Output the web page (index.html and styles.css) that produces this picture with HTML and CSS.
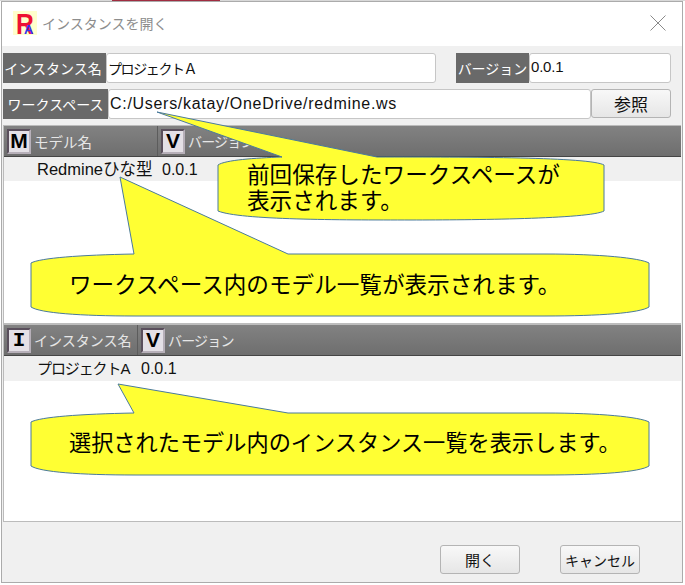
FILE: index.html
```html
<!DOCTYPE html>
<html lang="ja">
<head>
<meta charset="utf-8">
<title>インスタンスを開く</title>
<link rel="stylesheet" href="styles.css">
</head>
<body>
<div class="edge"></div>
<div class="window">
  <header class="titlebar">
    <div class="logo"><span class="logo-r">R</span><span class="logo-a">A</span></div>
    <span class="title">インスタンスを開く</span>
    <svg class="close" width="16" height="16" viewBox="0 0 16 16">
      <path d="M0.5 0.5L15.5 15.5M15.5 0.5L0.5 15.5" stroke="#8a8a8a" fill="none"/>
    </svg>
  </header>
  <main class="content">
    <div class="row">
      <label class="label w-inst">インスタンス名</label>
      <div class="input w-inst-input">プロジェクトＡ</div>
      <label class="label w-ver">バージョン</label>
      <div class="input w-ver-input">0.0.1</div>
    </div>
    <div class="row">
      <label class="label w-ws">ワークスペース</label>
      <div class="input w-ws-input">C:/Users/katay/OneDrive/redmine.ws</div>
      <button class="btn w-browse">参照</button>
    </div>
    <section class="table">
      <div class="pane pane-top">
        <div class="thead">
          <div class="th col-model"><span class="badge">M</span><span class="th-wide">モデル名</span></div>
          <div class="th"><span class="badge">V</span><span class="th-narrow">バージョン</span></div>
        </div>
        <div class="tr">
          <span class="cell cell-model">Redmineひな型</span>
          <span class="cell">0.0.1</span>
        </div>
      </div>
      <div class="pane pane-bottom">
        <div class="thead">
          <div class="th col-inst"><span class="badge badge-slab">I</span><span>インスタンス名</span></div>
          <div class="th"><span class="badge">V</span><span class="th-narrow">バージョン</span></div>
        </div>
        <div class="tr tr-inst">
          <span class="cell cell-inst">プロジェクトA</span>
          <span class="cell">0.0.1</span>
        </div>
      </div>
    </section>
    <footer class="footer">
      <button class="btn w-foot w-open">開く</button>
      <button class="btn w-foot">キャンセル</button>
    </footer>
  </main>
</div>
<svg class="callouts" width="685" height="585" viewBox="0 0 685 585">
  <path class="bubble" d="M157 112L377 157C470 157 590 157 604 165V211C590 219 470 220 411 220C340 220 240 220 218 211V165C225 160 255 158 282 157Z"/>
  <text class="bubble-text wide" x="247" y="183">前回保存したワークスペースが</text>
  <text class="bubble-text wide" x="247" y="209">表示されます。</text>
  <path class="bubble" d="M120 177L288 254H545C600 254 640 258 649 263V307C640 313 600 316 545 316H135C80 316 40 313 31 307V263C40 258 80 255 134 254Z"/>
  <text class="bubble-text wide" x="69" y="293">ワークスペース内のモデル一覧が表示されます。</text>
  <path class="bubble" d="M118 384L288 413H545C600 413 640 417 649 422V466C640 472 600 475 545 475H135C80 475 40 472 31 466V422C40 417 80 414 134 413Z"/>
  <text class="bubble-text" x="69" y="451">選択されたモデル内のインスタンス一覧を表示します。</text>
</svg>
</body>
</html>
```
FILE: styles.css
```css
html, body {
  margin: 0;
  padding: 0;
  background: #fff;
}
body {
  position: relative;
  width: 685px;
  height: 585px;
  overflow: hidden;
  font-family: "Liberation Sans", "Noto Sans CJK JP", sans-serif;
}
.edge {
  height: 1px;
  background: linear-gradient(90deg, #d8d8d8 112px, #a02c40 112px, #a02c40 220px, #d8d8d8 220px);
}
.window {
  box-sizing: border-box;
  width: 682px;
  height: 582px;
  margin-left: 1px;
  border: 1px solid #ababab;
  display: flex;
  flex-direction: column;
  background: #f0f0f0;
}
.titlebar {
  box-sizing: border-box;
  height: 44px;
  flex: none;
  background: #fff;
  display: flex;
  align-items: center;
  padding: 0 16px 2px 11px;
}
.logo {
  position: relative;
  flex: none;
  width: 24px;
  height: 24px;
  background: #ffffcc;
}
.logo-r {
  position: absolute;
  left: 3px;
  top: 1px;
  font: bold 29px/24px "Liberation Sans", sans-serif;
  color: #ee1133;
  transform: scaleX(0.85);
  transform-origin: left center;
}
.logo-a {
  position: absolute;
  left: 11px;
  top: 14px;
  font: bold 13px/10px "Liberation Sans", sans-serif;
  color: #3333ee;
}
.title {
  margin-left: 5px;
  font-size: 14px;
  color: #8d8d8d;
  flex: 1;
}
.close { flex: none; }
.content {
  flex: 1;
  display: flex;
  flex-direction: column;
  padding: 7px 0 0 1px;
}
.row {
  display: flex;
  height: 30px;
  margin-bottom: 6px;
  font-size: 15px;
}
.label {
  background: #696969;
  color: #fff;
  font-size: 14px;
  display: flex;
  align-items: center;
  justify-content: center;
  white-space: nowrap;
}
.input {
  box-sizing: border-box;
  background: #fff;
  border: 1px solid #c6c6c6;
  border-radius: 3px;
  display: flex;
  align-items: center;
  padding-left: 1px;
  color: #111;
  white-space: nowrap;
  font-size: 15px;
}
.w-inst { width: 103px; padding-right: 3px; box-sizing: border-box; }
.w-inst-input { width: 330px; font-size: 14px; letter-spacing: -1.4px; }
.w-ver { width: 73px; margin-left: 20px; }
.w-ver-input { width: 142px; letter-spacing: -0.2px; padding-bottom: 3px; }
.w-ws { width: 105px; }
.w-ws-input { width: 483px; font-size: 16px; letter-spacing: 0.7px; }
.btn {
  box-sizing: border-box;
  background: linear-gradient(#f8f8f8, #e6e6e6);
  border: 1px solid #b4b4b4;
  border-radius: 3px;
  padding: 0;
  color: #111;
  font-family: inherit;
  font-size: 14px;
}
.w-browse { width: 80px; height: 29px; font-size: 17px; }
.table {
  box-sizing: border-box;
  width: 678px;
  height: 397px;
  border: 1px solid #bbb;
  border-right-width: 0;
  background: #fff;
  display: flex;
  flex-direction: column;
}
.pane-top {
  height: 199px;
  box-sizing: border-box;
  border-bottom: 2px solid #bdbdbd;
}
.pane-bottom { flex: 1; }
.thead {
  box-sizing: border-box;
  height: 31px;
  display: flex;
  background: linear-gradient(#828282, #6e6e6e);
  border-bottom: 1px solid #454545;
}
.th {
  box-sizing: border-box;
  display: flex;
  align-items: center;
  gap: 3px;
  padding-left: 3px;
  color: #e6e6e6;
  font-size: 14px;
}
.th-wide { font-size: 14.5px; }
.th-narrow { letter-spacing: -0.8px; }
.col-model { width: 154px; border-right: 1px solid #5c5c5c; }
.col-inst { width: 134px; border-right: 1px solid #5c5c5c; }
.badge {
  box-sizing: border-box;
  width: 24px;
  height: 25px;
  display: flex;
  align-items: center;
  justify-content: center;
  background: #e4e0e6;
  border: 2px solid #5a4f5c;
  border-right-color: #b7b0b9;
  border-bottom-color: #b7b0b9;
  color: #000;
  font: bold 21px "Liberation Sans", sans-serif;
}
.badge-slab { font-family: "Liberation Mono", monospace; }
.tr {
  height: 24px;
  display: flex;
  align-items: center;
  background: #f0f0f0;
  color: #111;
  font-size: 16px;
  line-height: 24px;
}
.tr-inst { height: 25px; }
.cell { white-space: nowrap; padding-top: 1px; }
.cell-model { width: 125px; margin-left: 33px; font-size: 16.5px; padding-top: 0; }
.cell-inst { width: 104px; margin-left: 33px; font-size: 15px; letter-spacing: -1.1px; padding-top: 0; }
.footer {
  display: flex;
  justify-content: flex-end;
  gap: 40px;
  padding: 23px 42px 0 0;
}
.w-foot { width: 80px; height: 29px; }
.w-open { font-size: 15px; }
.callouts {
  position: absolute;
  left: 0;
  top: 0;
  pointer-events: none;
}
.bubble {
  fill: #ffff33;
  stroke: #4a7a9c;
  stroke-width: 1;
}
.bubble-text {
  font-family: "Liberation Sans", "Noto Sans CJK JP", sans-serif;
  font-size: 22.2px;
  fill: #000;
}
.bubble-text.wide { font-size: 22.6px; }
```
